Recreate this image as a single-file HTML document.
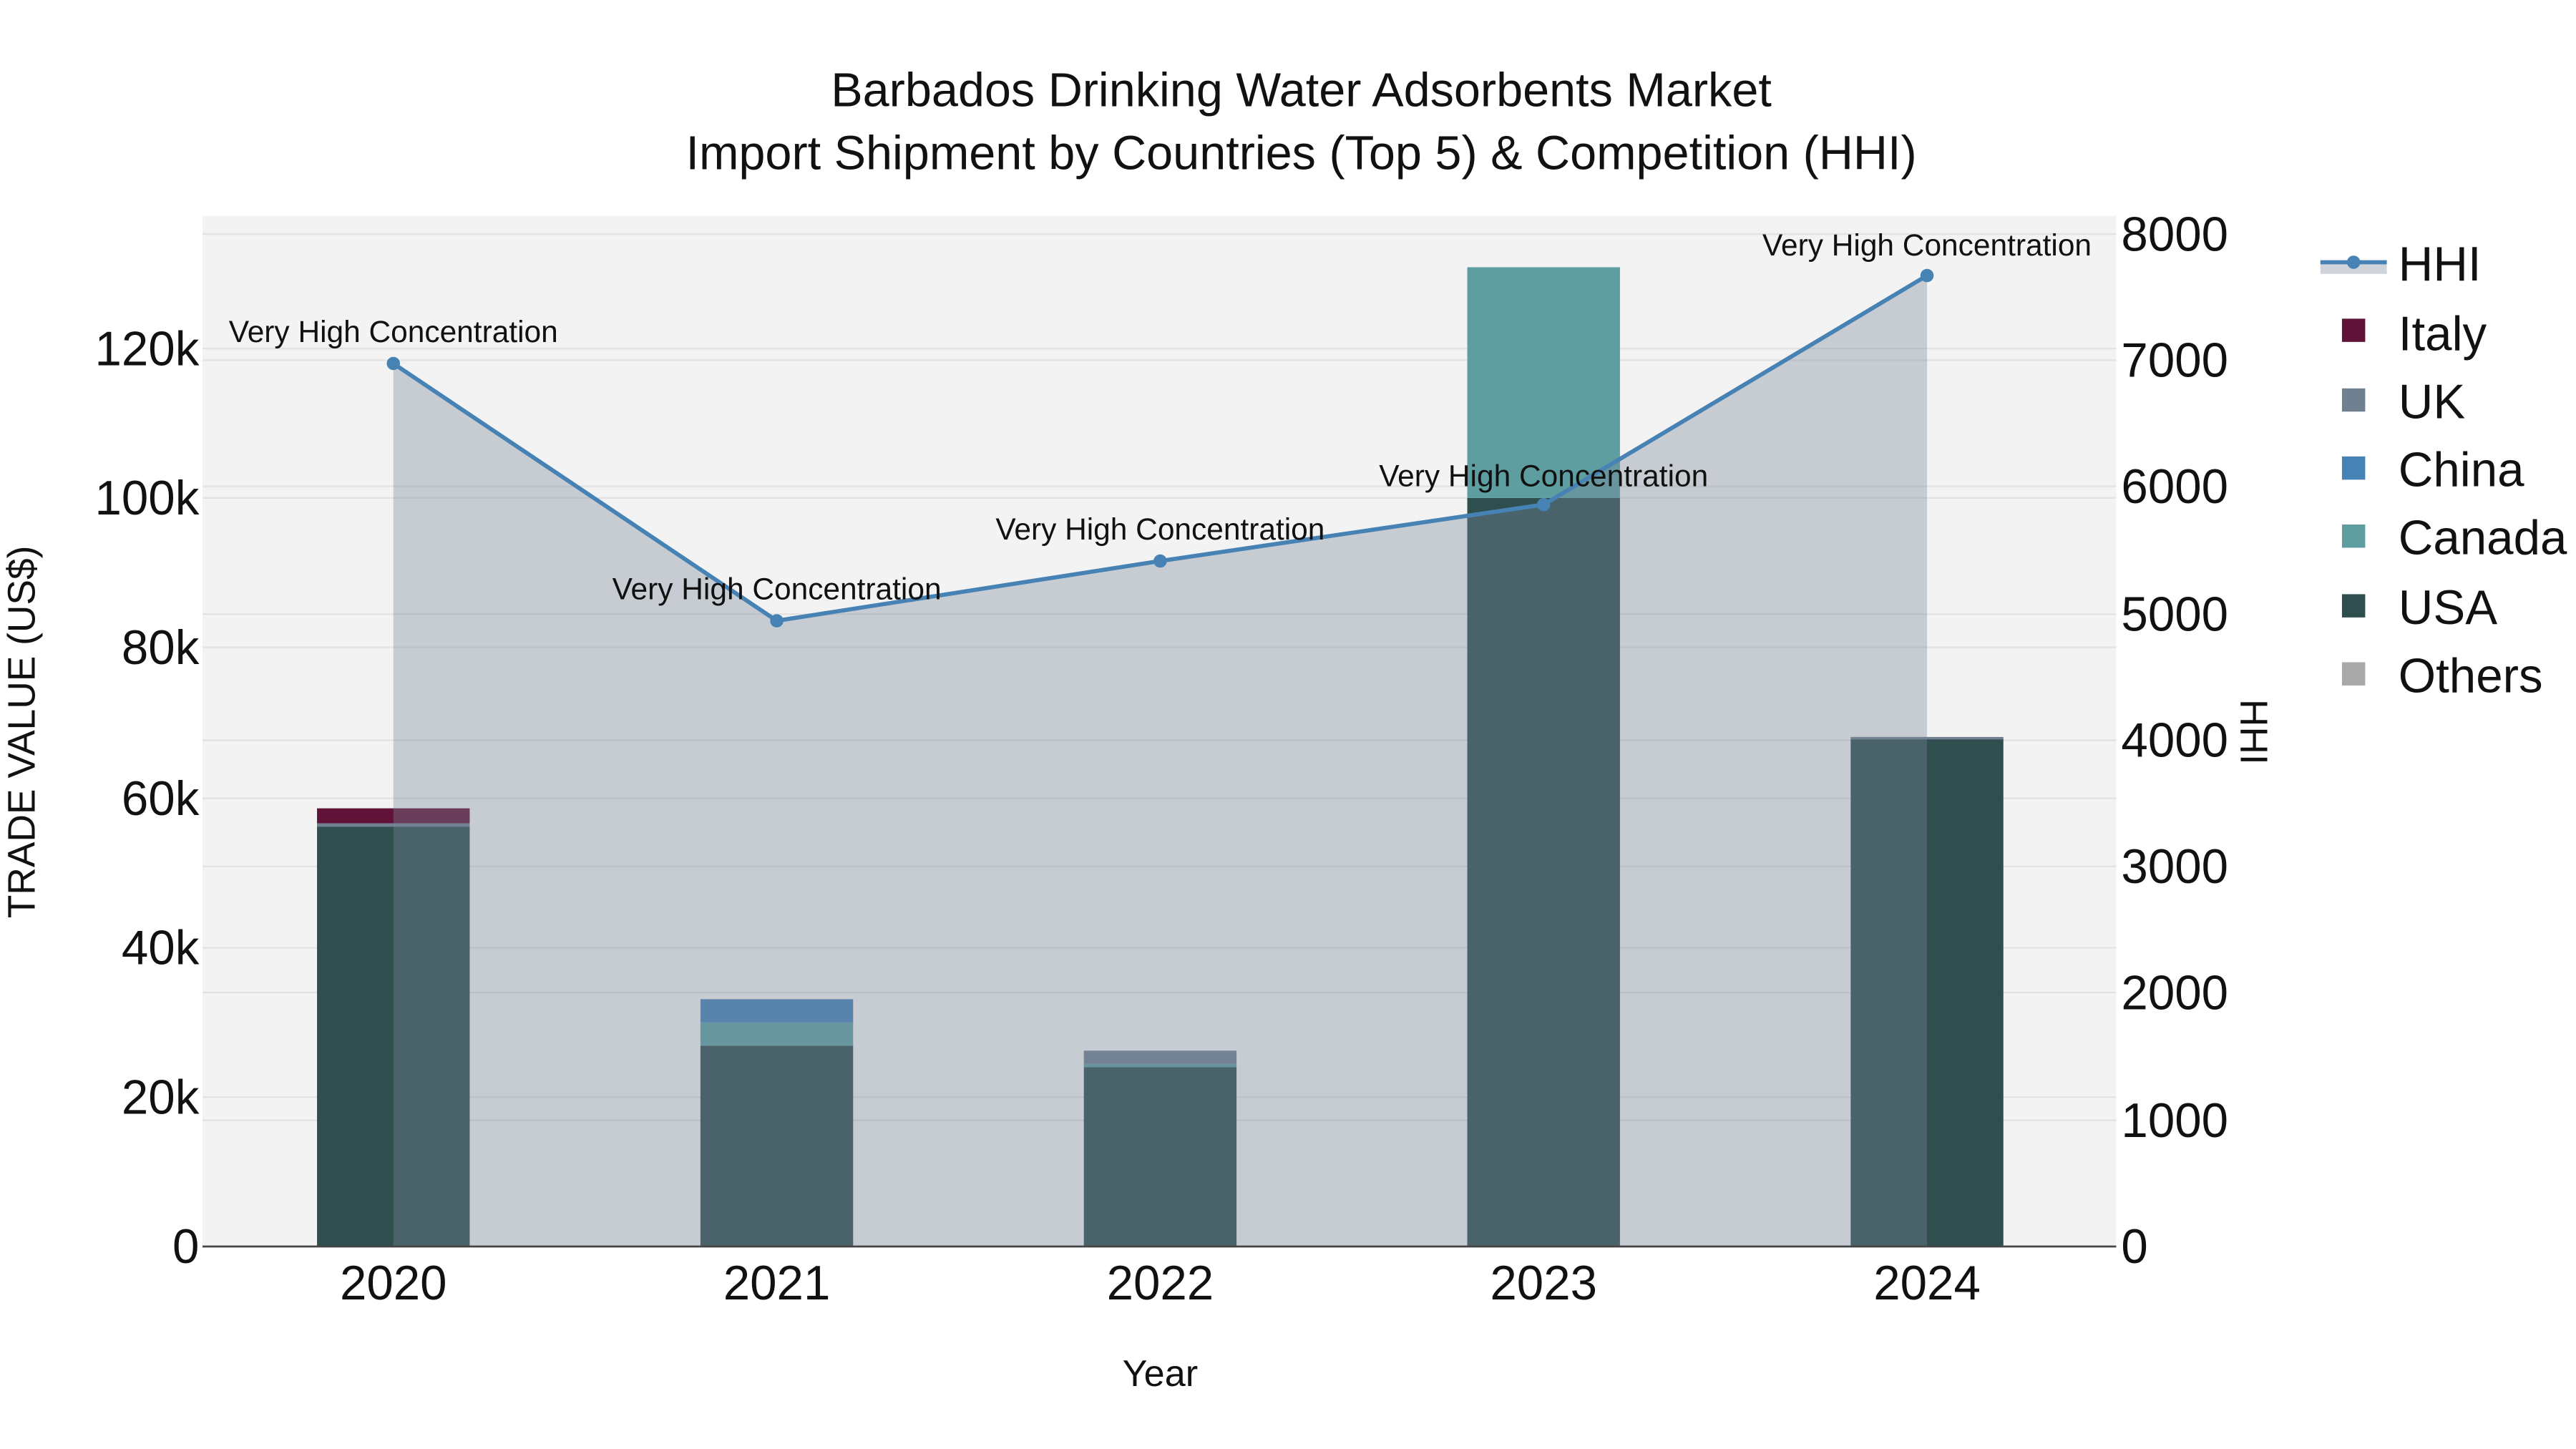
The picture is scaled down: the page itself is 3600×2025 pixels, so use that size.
<!DOCTYPE html>
<html><head><meta charset="utf-8"><style>
html,body{margin:0;padding:0;background:#fff;}
svg{display:block;}
text{font-family:"Liberation Sans",Arial,sans-serif;fill:#111;}
</style></head><body>
<svg width="3600" height="2025" viewBox="0 0 1552 873" xmlns="http://www.w3.org/2000/svg">
<rect x="0" y="0" width="1552" height="873" fill="#fff"/>
<text x="784" y="64" font-size="28.7" text-anchor="middle">Barbados Drinking Water Adsorbents Market</text>
<text x="784" y="102" font-size="28.7" text-anchor="middle">Import Shipment by Countries (Top 5) &amp; Competition (HHI)</text>
<rect x="122" y="130" width="1153" height="621" fill="#f3f3f3"/>
<g stroke="#e2e2e2" stroke-width="1">
<line x1="122" x2="1275" y1="661" y2="661"/><line x1="122" x2="1275" y1="571" y2="571"/>
<line x1="122" x2="1275" y1="481" y2="481"/><line x1="122" x2="1275" y1="390" y2="390"/>
<line x1="122" x2="1275" y1="300" y2="300"/><line x1="122" x2="1275" y1="210" y2="210"/>
<line x1="122" x2="1275" y1="675" y2="675"/><line x1="122" x2="1275" y1="598" y2="598"/>
<line x1="122" x2="1275" y1="522" y2="522"/><line x1="122" x2="1275" y1="446" y2="446"/>
<line x1="122" x2="1275" y1="370" y2="370"/><line x1="122" x2="1275" y1="293" y2="293"/>
<line x1="122" x2="1275" y1="217" y2="217"/><line x1="122" x2="1275" y1="141" y2="141"/>
</g>
<rect x="191" y="498" width="92" height="253" fill="#2f4f4f"/>
<rect x="191" y="496" width="92" height="2" fill="#708090"/>
<rect x="191" y="487" width="92" height="9" fill="#611337"/>
<rect x="422" y="630" width="92" height="121" fill="#2f4f4f"/>
<rect x="422" y="616" width="92" height="14" fill="#5f9ea0"/>
<rect x="422" y="602" width="92" height="14" fill="#4682b4"/>
<rect x="653" y="643" width="92" height="108" fill="#2f4f4f"/>
<rect x="653" y="641" width="92" height="2" fill="#5f9ea0"/>
<rect x="653" y="633" width="92" height="8" fill="#708090"/>
<rect x="884" y="300" width="92" height="451" fill="#2f4f4f"/>
<rect x="884" y="161" width="92" height="139" fill="#5f9ea0"/>
<rect x="1115" y="445" width="92" height="306" fill="#2f4f4f"/>
<rect x="1115" y="444" width="92" height="1.5" fill="#708090"/>
<polygon points="237,219 468,374 699,338 930,304 1161,166 1161,751 237,751" fill="rgb(123,137,156)" fill-opacity="0.36"/>
<polyline points="237,219 468,374 699,338 930,304 1161,166" fill="none" stroke="#4682b4" stroke-width="2.5"/>
<g fill="#4682b4"><circle cx="237" cy="219" r="4"/><circle cx="468" cy="374" r="4"/><circle cx="699" cy="338" r="4"/><circle cx="930" cy="304" r="4"/><circle cx="1161" cy="166" r="4"/></g>
<g font-size="18.3" text-anchor="middle">
<text x="237" y="206">Very High Concentration</text>
<text x="468" y="361">Very High Concentration</text>
<text x="699" y="325">Very High Concentration</text>
<text x="930" y="293">Very High Concentration</text>
<text x="1161" y="154">Very High Concentration</text>
</g>
<line x1="122" x2="1275" y1="751" y2="751" stroke="#444" stroke-width="1.2"/>
<g font-size="29" text-anchor="end">
<text x="120" y="761">0</text><text x="120" y="671">20k</text><text x="120" y="581">40k</text>
<text x="120" y="491">60k</text><text x="120" y="400">80k</text><text x="120" y="310">100k</text><text x="120" y="220">120k</text>
</g>
<g font-size="29" text-anchor="start">
<text x="1278" y="761">0</text><text x="1278" y="685">1000</text><text x="1278" y="608">2000</text>
<text x="1278" y="532">3000</text><text x="1278" y="456">4000</text><text x="1278" y="380">5000</text>
<text x="1278" y="303">6000</text><text x="1278" y="227">7000</text><text x="1278" y="151">8000</text>
</g>
<g font-size="29" text-anchor="middle">
<text x="237" y="783">2020</text><text x="468" y="783">2021</text><text x="699" y="783">2022</text>
<text x="930" y="783">2023</text><text x="1161" y="783">2024</text>
</g>
<text x="699" y="835" font-size="22.5" text-anchor="middle">Year</text>
<text transform="translate(21,441) rotate(-90)" font-size="23" text-anchor="middle">TRADE VALUE (US$)</text>
<text transform="translate(1350,441) rotate(90)" font-size="23" text-anchor="middle">HHI</text>
<rect x="1398" y="158" width="40" height="7" fill="rgb(123,137,156)" fill-opacity="0.36"/>
<line x1="1398" x2="1438" y1="158" y2="158" stroke="#4682b4" stroke-width="2.5"/>
<circle cx="1418" cy="158" r="4" fill="#4682b4"/>
<rect x="1411" y="192" width="14" height="14" fill="#611337"/>
<rect x="1411" y="234" width="14" height="14" fill="#708090"/>
<rect x="1411" y="275" width="14" height="14" fill="#4682b4"/>
<rect x="1411" y="316" width="14" height="14" fill="#5f9ea0"/>
<rect x="1411" y="358" width="14" height="14" fill="#2f4f4f"/>
<rect x="1411" y="399" width="14" height="14" fill="#a9a9a9"/>
<g font-size="29">
<text x="1445" y="169">HHI</text><text x="1445" y="211">Italy</text><text x="1445" y="252">UK</text>
<text x="1445" y="293">China</text><text x="1445" y="334">Canada</text><text x="1445" y="376">USA</text><text x="1445" y="417">Others</text>
</g>
</svg>
</body></html>
